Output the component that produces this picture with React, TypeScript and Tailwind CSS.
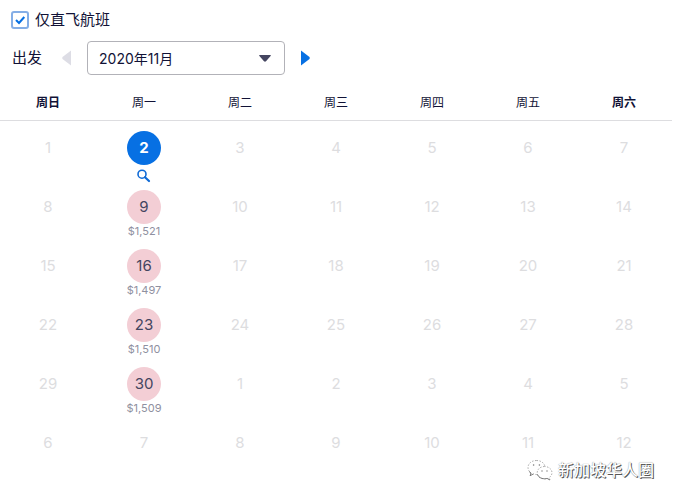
import { useState } from 'react';

type Day = { day: number; price?: string; selected?: boolean };

const weekdays = ['周日', '周一', '周二', '周三', '周四', '周五', '周六'];

const weeks: Day[][] = [
  [{ day: 1 }, { day: 2, selected: true }, { day: 3 }, { day: 4 }, { day: 5 }, { day: 6 }, { day: 7 }],
  [{ day: 8 }, { day: 9, price: '$1,521' }, { day: 10 }, { day: 11 }, { day: 12 }, { day: 13 }, { day: 14 }],
  [{ day: 15 }, { day: 16, price: '$1,497' }, { day: 17 }, { day: 18 }, { day: 19 }, { day: 20 }, { day: 21 }],
  [{ day: 22 }, { day: 23, price: '$1,510' }, { day: 24 }, { day: 25 }, { day: 26 }, { day: 27 }, { day: 28 }],
  [{ day: 29 }, { day: 30, price: '$1,509' }, { day: 1 }, { day: 2 }, { day: 3 }, { day: 4 }, { day: 5 }],
  [{ day: 6 }, { day: 7 }, { day: 8 }, { day: 9 }, { day: 10 }, { day: 11 }, { day: 12 }],
];

function SearchIcon() {
  return (
    <svg viewBox="0 0 14 14" className="size-3.5" fill="none" stroke="#0f6ad6">
      <circle cx="5" cy="5.2" r="4" strokeWidth="1.6" />
      <path d="M8 8.2 L12 12" strokeWidth="2.2" strokeLinecap="round" />
    </svg>
  );
}

function WeChatIcon() {
  return (
    <svg viewBox="0 0 28 24" className="h-6 w-7" fill="#fff" stroke="#999" strokeWidth="0.8" strokeDasharray="1.5 1.5">
      <path d="M10.5 2.5 C5.5 2.5 2 5.6 2 9.5 C2 11.8 3.2 13.7 5 15 L4.2 17.6 L7.4 16 C8.4 16.3 9.4 16.5 10.5 16.5 C15.5 16.5 19 13.4 19 9.5 C19 5.6 15.5 2.5 10.5 2.5 Z" />
      <path d="M18.5 8.5 C14.3 8.5 11.2 11.3 11.2 14.7 C11.2 18.1 14.3 20.8 18.5 20.8 C19.4 20.8 20.3 20.7 21.1 20.4 L24 22 L23.3 19.5 C24.9 18.3 26 16.6 26 14.7 C26 11.3 22.7 8.5 18.5 8.5 Z" />
      <path d="M3 13.5 L5 15 L4.2 17.6 L7.4 16 M11.4 16.5 C12.3 19 15 20.8 18.5 20.8 C19.4 20.8 20.3 20.7 21.1 20.4 L24 22" fill="none" stroke="#666" strokeDasharray="none" />
      <g fill="#777" stroke="none">
        <circle cx="7.6" cy="7" r="0.8" />
        <circle cx="13.4" cy="7" r="0.8" />
        <circle cx="16" cy="13" r="0.7" />
        <circle cx="21" cy="13" r="0.7" />
      </g>
    </svg>
  );
}

function DayCell({ day, price, selected }: Day) {
  if (!price && !selected) {
    return <span className="block leading-[34px] text-[#dddddf]">{day}</span>;
  }
  return (
    <button type="button" className="flex w-full flex-col items-center">
      <span
        className={
          selected
            ? 'size-[34px] rounded-full bg-[#0770e3] font-bold leading-[34px] text-white'
            : 'size-[34px] rounded-full bg-[#f3ced5] leading-[34px] text-[#444560]'
        }
      >
        {day}
      </span>
      {selected ? (
        <span className="h-[15px] pt-1">
          <SearchIcon />
        </span>
      ) : (
        <span className="text-[11px] leading-[15px] text-[#8f90a0]">{price}</span>
      )}
    </button>
  );
}

export default function App() {
  const [direct, setDirect] = useState(true);

  return (
    <main className="relative min-h-screen bg-white pr-1 font-[Inter,'Noto_Sans_CJK_SC',sans-serif] text-[15px] text-[#111236]">
      <div className="flex items-center gap-1.5 px-[11px] pt-2">
        <span className="relative size-[18px]">
          <input
            id="direct"
            type="checkbox"
            checked={direct}
            onChange={(e) => setDirect(e.target.checked)}
            className="block size-[18px] appearance-none rounded-[3px] border-2 border-[#84aee6] bg-white"
          />
          {direct && (
            <svg viewBox="0 0 18 18" className="pointer-events-none absolute inset-0" fill="none" stroke="#0770e3" strokeWidth="2">
              <path d="M5 9 L8 12 L13.3 6" />
            </svg>
          )}
        </span>
        <label htmlFor="direct" className="leading-6">仅直飞航班</label>
      </div>

      <div className="flex items-center px-3 pt-[9px]">
        <label htmlFor="month">出发</label>
        <button type="button" aria-label="上个月" disabled className="ml-5 mr-4">
          <svg viewBox="0 0 9 16" className="h-4 w-[9px]" fill="#dddde5">
            <path d="M9 0.5 V15.5 L0.5 9 Q0 8 0.5 7 Z" />
          </svg>
        </button>
        <div className="relative w-[198px]">
          <select
            id="month"
            className="h-[34px] w-full appearance-none rounded-[4px] border border-[#b2b2b8] bg-white px-[11px] text-[14px]"
          >
            <option>2020年11月</option>
          </select>
          <svg viewBox="0 0 12 7" className="pointer-events-none absolute right-[14px] top-[14px] h-[7px] w-3" fill="#444560">
            <path d="M0.6 0 H11.4 Q12.2 0.4 11.6 1 L7 6.3 Q6 7.2 5 6.3 L0.4 1 Q-0.2 0.4 0.6 0 Z" />
          </svg>
        </div>
        <button type="button" aria-label="下个月" className="ml-4">
          <svg viewBox="0 0 9 16" className="h-4 w-[9px]" fill="#0770e3">
            <path d="M0 0.5 V15.5 L8.5 9 Q9 8 8.5 7 Z" />
          </svg>
        </button>
      </div>

      <table className="mt-3 w-full table-fixed border-collapse text-center">
        <thead className="border-b border-[#dddde0]">
          <tr>
            {weekdays.map((name, i) => (
              <th
                key={name}
                scope="col"
                className={i === 0 || i === 6 ? 'h-[33px] text-[12px] font-bold' : 'h-[33px] text-[12px] font-normal'}
              >
                {name}
              </th>
            ))}
          </tr>
        </thead>
        <tbody>
          {weeks.map((week, w) => (
            <tr key={w}>
              {week.map((d, i) => (
                <td key={i} className="h-[59px] p-0 pt-[10px] align-top">
                  <DayCell {...d} />
                </td>
              ))}
            </tr>
          ))}
        </tbody>
      </table>

      <div className="absolute bottom-[17px] right-[22px] flex items-center gap-1">
        <WeChatIcon />
        <span className="text-[16px] font-medium leading-6 text-white [text-shadow:1px_1px_0_#555,0_0_1px_#777]">新加坡华人圈</span>
      </div>
    </main>
  );
}
